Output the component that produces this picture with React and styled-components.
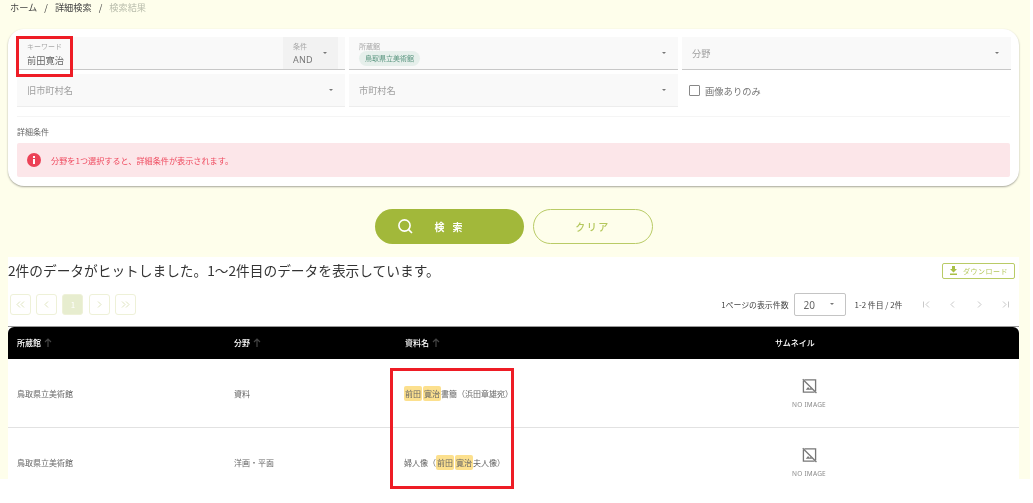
import React from "react";
import styled, { createGlobalStyle } from "styled-components";

const Global = createGlobalStyle`
  html, body { margin: 0; padding: 0; background: #fff; }
  body { font-family: "Noto Sans CJK JP", "Noto Sans", sans-serif; color: #333; }
`;

const Shell = styled.div`
  position: relative;
  width: 1033px;
  height: 503px;
  overflow: hidden;
  background: #fff;
`;
const Page = styled.div`
  width: 1030px;
  height: 479px;
  overflow: hidden;
  padding: 0 11px 0 8px;
  box-sizing: border-box;
  background: #fefeeb;
  filter: blur(0.3px);
`;

const Breadcrumb = styled.nav`
  display: flex;
  align-items: center;
  height: 14px;
  padding-left: 2px;
  font-size: 9.2px;
  gap: 7px;
  margin-bottom: 15px;
`;
const Crumb = styled.span`
  color: ${(p) => (p.$muted ? "#b9bdac" : "#444")};
`;

const Card = styled.section`
  background: #fff;
  border-radius: 16px;
  box-shadow: 0 1px 2px rgba(0, 0, 0, 0.35);
  padding: 8px 9px 9px;
  height: 157px;
  box-sizing: border-box;
`;
const FieldGrid = styled.div`
  display: grid;
  grid-template-columns: 328px 329px 329px;
  grid-auto-rows: 33px;
  row-gap: 4px;
  column-gap: 4px;
`;
const Field = styled.div`
  position: relative;
  background: #f9f9f9;
  border-bottom: 1px solid ${(p) => (p.$soft ? "#ededed" : "#c8c8c8")};
  box-sizing: border-box;
  display: flex;
  align-items: center;
  padding: 0 10px;
  font-size: 9.2px;
  color: #a0a0a0;
`;
const KeywordField = styled(Field)`
  padding: 0;
  align-items: stretch;
`;
const KeywordInput = styled.div`
  flex: 1;
  padding: 5px 10px 0;
`;
const Condition = styled.div`
  width: 55px;
  margin-right: 7px;
  background: #f2f2f2;
  padding: 5px 10px 0;
  box-sizing: border-box;
  position: relative;
`;
const Stacked = styled.div`
  display: flex;
  flex-direction: column;
  align-self: stretch;
  padding-top: 5px;
`;
const FloatLabel = styled.div`
  font-size: 7px;
  line-height: 9px;
  color: #a8a8a8;
`;
const InputValue = styled.div`
  font-size: 9.25px;
  line-height: 14px;
  color: #666;
  margin-top: 2px;
`;
const CondValue = styled(InputValue)`
  font-family: "Noto Sans", sans-serif;
  font-size: 9px;
  letter-spacing: 0.2px;
  color: #777;
`;
const Chip = styled.span`
  align-self: flex-start;
  background: #e6efeb;
  color: #5b9680;
  font-size: 7px;
  line-height: 15px;
  height: 15px;
  padding: 0 6px;
  border-radius: 8px;
`;
const Caret = styled.span`
  position: absolute;
  right: ${(p) => p.$right || 12}px;
  top: ${(p) => p.$top || 15}px;
  width: 0;
  height: 0;
  border-left: 2.5px solid transparent;
  border-right: 2.5px solid transparent;
  border-top: 2.5px solid #777;
`;
const CheckRow = styled.label`
  display: flex;
  align-items: center;
  gap: 5px;
  padding-left: 7px;
  font-size: 9.3px;
  color: #777;
`;
const CheckBox = styled.span`
  width: 9px;
  height: 9px;
  border: 1px solid #888;
  border-radius: 1px;
`;
const Divider = styled.hr`
  border: 0;
  border-top: 1px solid #f5f5f5;
  margin: 9px 0 0;
`;
const SectionLabel = styled.div`
  font-size: 8px;
  line-height: 12px;
  color: #666;
  margin: 9px 0 5px;
`;
const Alert = styled.div`
  display: flex;
  align-items: center;
  gap: 10px;
  height: 34px;
  padding-left: 10px;
  background: #fce6e9;
  border-radius: 2px;
  color: #ef4a5f;
  font-size: 8.15px;
`;

const Buttons = styled.div`
  display: flex;
  justify-content: center;
  gap: 9px;
  margin: 23px 0 13px;
`;
const SearchButton = styled.button`
  width: 149px;
  height: 35px;
  border: 0;
  border-radius: 18px;
  background: #a2b83a;
  color: #fff;
  font: 700 10px "Noto Sans CJK JP", sans-serif;
  letter-spacing: 8px;
  display: flex;
  align-items: center;
  padding: 0 0 0 22px;
  gap: 21px;
`;
const ClearButton = styled.button`
  width: 120px;
  height: 35px;
  box-sizing: border-box;
  border: 1px solid #b9cb66;
  border-radius: 18px;
  background: transparent;
  color: #b4c75c;
  font: 500 10px "Noto Sans CJK JP", sans-serif;
  letter-spacing: 1.5px;
`;

const Results = styled.section`
  background: #fff;
  height: 222px;
  overflow: hidden;
`;
const HitRow = styled.div`
  display: flex;
  align-items: center;
  justify-content: space-between;
  height: 27px;
  padding-right: 4px;
`;
const HitText = styled.div`
  font-size: 13.7px;
  color: #333;
  white-space: nowrap;
  padding-bottom: 2px;
`;
const DownloadButton = styled.button`
  width: 73px;
  height: 16px;
  box-sizing: border-box;
  padding: 0;
  border: 1px solid #b9cb66;
  border-radius: 2px;
  background: #fff;
  color: #b4c75c;
  font: 400 7px "Noto Sans CJK JP", sans-serif;
  letter-spacing: 0.5px;
  display: flex;
  align-items: center;
  justify-content: center;
  gap: 5px;
`;
const PagerRow = styled.div`
  display: flex;
  align-items: center;
  justify-content: space-between;
  height: 23px;
  margin: 9px 0 10px;
  padding: 0 9px 0 2px;
`;
const Pager = styled.div`
  display: flex;
  gap: 5.2px;
`;
const PageBtn = styled.span`
  width: 21px;
  height: 21px;
  box-sizing: border-box;
  border: 1px solid #eef1d8;
  border-radius: 3px;
  background: ${(p) => (p.$active ? "#e7edcf" : "#fff")};
  color: ${(p) => (p.$active ? "#fff" : "#dfe5c0")};
  font-size: 8px;
  display: flex;
  align-items: center;
  justify-content: center;
`;
const PerPage = styled.div`
  display: flex;
  align-items: center;
  font-size: 7.9px;
  color: #444;
`;
const PerSelect = styled.div`
  position: relative;
  width: 52px;
  height: 23px;
  box-sizing: border-box;
  border: 1px solid #c4c4c4;
  border-radius: 2px;
  margin: 0 9px 0 5px;
  padding-left: 9px;
  display: flex;
  align-items: center;
  font: 10px "Noto Sans", sans-serif;
  color: #666;
`;
const PageArrows = styled.div`
  display: flex;
  gap: 17.5px;
  margin-left: 19px;
  color: #c8c8c8;
`;

const Table = styled.table`
  width: 100%;
  border-collapse: collapse;
  table-layout: fixed;
  font-size: 8px;
`;
const HeadCell = styled.th`
  background: #000;
  color: #fff;
  height: 31px;
  padding: 0 0 1px ${(p) => p.$pad || 9}px;
  font-weight: 500;
  font-size: 8px;
  text-align: left;
  border-top: 1px solid #999;
  &:first-child { border-top-left-radius: 6px; }
  &:last-child { border-top-right-radius: 6px; }
`;
const Arrow = styled.span`
  display: inline-flex;
  vertical-align: -1px;
  margin-left: 3px;
  color: #444;
`;
const Cell = styled.td`
  height: 68px;
  padding: 0 ${(p) => p.$padRight || 0}px 0 ${(p) => p.$pad || 9}px;
  border-bottom: 1px solid #e2e2e2;
  color: #666;
  vertical-align: middle;
`;
const Mark = styled.mark`
  background: #fce08e;
  color: #666;
  border-radius: 2px;
  padding: 2px 1px;
  margin-right: ${(p) => p.$gap || 0}px;
`;
const NoImage = styled.div`
  display: flex;
  flex-direction: column;
  align-items: center;
  gap: 6px;
  color: #8a8a8a;
  font: 6.5px "Noto Sans", sans-serif;
  letter-spacing: 0.2px;
`;
const RedBox = styled.div`
  position: absolute;
  box-sizing: border-box;
  border: 3px solid #ee1c25;
  pointer-events: none;
  left: ${(p) => p.$l}px;
  top: ${(p) => p.$t}px;
  width: ${(p) => p.$w}px;
  height: ${(p) => p.$h}px;
`;

const SearchIcon = () => (
  <svg width="17" height="17" viewBox="0 0 17 17" fill="none" stroke="#fff" strokeWidth="1.6">
    <circle cx="7.5" cy="7.5" r="5.6" />
    <path d="M11.6 11.6 15 15" />
  </svg>
);
const InfoIcon = () => (
  <svg width="14" height="14" viewBox="0 0 14 14">
    <circle cx="7" cy="7" r="7" fill="#ec4257" />
    <rect x="6" y="6" width="2" height="5" fill="#fff" />
    <rect x="6" y="3" width="2" height="2" fill="#fff" />
  </svg>
);
const DownloadIcon = () => (
  <svg width="9" height="9" viewBox="0 0 9 9" fill="#a9bf45">
    <path d="M3 0h3v3h2L4.5 6.5 1 3h2zM1 7.6h7V9H1z" />
  </svg>
);
const UpIcon = () => (
  <svg width="8" height="9" viewBox="0 0 8 9" fill="none" stroke="currentColor" strokeWidth="1.2">
    <path d="M4 9V1M1 4l3-3 3 3" />
  </svg>
);
const NoImageIcon = () => (
  <svg width="15" height="16" viewBox="0 0 16 16" fill="none" stroke="#777" strokeWidth="1.4">
    <path d="M2.5 1.5h12v12" />
    <path d="M1.5 2.5v12h12" />
    <path d="M.8.8 15.4 15.4" />
    <path d="M4 12l2.5-3 1.5 2 1-1 2 2z" fill="#777" stroke="none" />
  </svg>
);
const Chevron = ({ d }) => (
  <svg width="9" height="9" viewBox="0 0 9 9" fill="none" stroke="currentColor" strokeWidth="1">
    <path d={d} />
  </svg>
);

const rows = [
  {
    org: "鳥取県立美術館",
    field: "資料",
    name: (
      <>
        <Mark $gap={1}>前田</Mark>
        <Mark>寛治</Mark>書簡（浜田章雄宛）
      </>
    ),
  },
  {
    org: "鳥取県立美術館",
    field: "洋画・平面",
    name: (
      <>
        婦人像（<Mark $gap={1}>前田</Mark>
        <Mark>寛治</Mark>夫人像）
      </>
    ),
  },
];

export default function App() {
  return (
    <Shell>
      <Global />
      <Page>
        <Breadcrumb>
          <Crumb>ホーム</Crumb>
          <Crumb>/</Crumb>
          <Crumb>詳細検索</Crumb>
          <Crumb>/</Crumb>
          <Crumb $muted>検索結果</Crumb>
        </Breadcrumb>

        <Card>
          <FieldGrid>
            <KeywordField>
              <KeywordInput>
                <FloatLabel>キーワード</FloatLabel>
                <InputValue>前田寛治</InputValue>
              </KeywordInput>
              <Condition>
                <FloatLabel>条件</FloatLabel>
                <CondValue>AND</CondValue>
                <Caret $right={11} $top={15} />
              </Condition>
            </KeywordField>
            <Field>
              <Stacked>
                <FloatLabel>所蔵館</FloatLabel>
                <Chip>鳥取県立美術館</Chip>
              </Stacked>
              <Caret />
            </Field>
            <Field>
              分野
              <Caret />
            </Field>
            <Field $soft>
              旧市町村名
              <Caret />
            </Field>
            <Field $soft>
              市町村名
              <Caret />
            </Field>
            <CheckRow>
              <CheckBox />
              画像ありのみ
            </CheckRow>
          </FieldGrid>
          <Divider />
          <SectionLabel>詳細条件</SectionLabel>
          <Alert>
            <InfoIcon />
            分野を1つ選択すると、詳細条件が表示されます。
          </Alert>
        </Card>

        <Buttons>
          <SearchButton>
            <SearchIcon />
            <span>検索</span>
          </SearchButton>
          <ClearButton>クリア</ClearButton>
        </Buttons>

        <Results>
          <HitRow>
            <HitText>2件のデータがヒットしました。1〜2件目のデータを表示しています。</HitText>
            <DownloadButton>
              <DownloadIcon />
              ダウンロード
            </DownloadButton>
          </HitRow>
          <PagerRow>
            <Pager>
              <PageBtn><Chevron d="M4 1.5 1 4.5l3 3M8 1.5l-3 3 3 3" /></PageBtn>
              <PageBtn><Chevron d="M6 1.5l-3 3 3 3" /></PageBtn>
              <PageBtn $active>1</PageBtn>
              <PageBtn><Chevron d="M3 1.5l3 3-3 3" /></PageBtn>
              <PageBtn><Chevron d="M1 1.5l3 3-3 3M5 1.5l3 3-3 3" /></PageBtn>
            </Pager>
            <PerPage>
              1ページの表示件数
              <PerSelect>
                20
                <Caret $right={11} $top={9} />
              </PerSelect>
              1-2 件目 / 2件
              <PageArrows>
                <Chevron d="M1.5 1.5v6M7 1.5l-3 3 3 3" />
                <Chevron d="M6 1.5l-3 3 3 3" />
                <Chevron d="M3 1.5l3 3-3 3" />
                <Chevron d="M2 1.5l3 3-3 3M7.5 1.5v6" />
              </PageArrows>
            </PerPage>
          </PagerRow>
          <Table>
            <colgroup>
              <col style={{ width: 217 }} />
              <col style={{ width: 171 }} />
              <col style={{ width: 247 }} />
              <col />
            </colgroup>
            <thead>
              <tr>
                <HeadCell>所蔵館<Arrow><UpIcon /></Arrow></HeadCell>
                <HeadCell>分野<Arrow><UpIcon /></Arrow></HeadCell>
                <HeadCell>資料名<Arrow><UpIcon /></Arrow></HeadCell>
                <HeadCell $pad={132}>サムネイル</HeadCell>
              </tr>
            </thead>
            <tbody>
              {rows.map((r) => (
                <tr key={r.field}>
                  <Cell>{r.org}</Cell>
                  <Cell>{r.field}</Cell>
                  <Cell $pad={8}>{r.name}</Cell>
                  <Cell $pad={1} $padRight={45}>
                    <NoImage>
                      <NoImageIcon />
                      NO IMAGE
                    </NoImage>
                  </Cell>
                </tr>
              ))}
            </tbody>
          </Table>
        </Results>
      </Page>

      <RedBox $l={16} $t={36} $w={57} $h={41} />
      <RedBox $l={390} $t={368} $w={124} $h={121} />
    </Shell>
  );
}
